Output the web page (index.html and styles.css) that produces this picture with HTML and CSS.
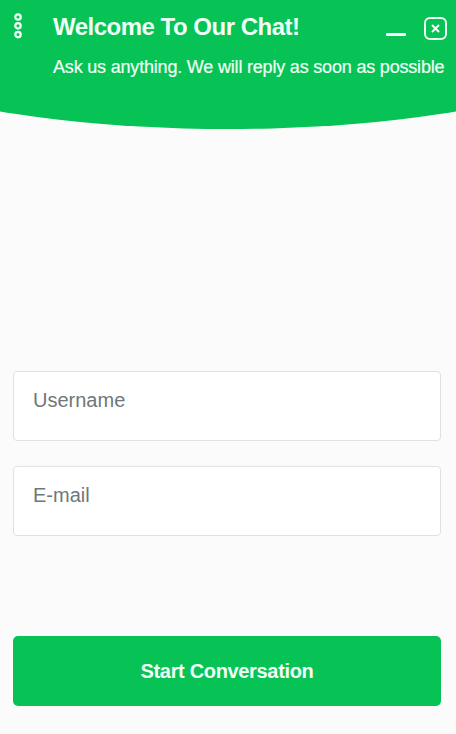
FILE: index.html
```html
<!DOCTYPE html>
<html lang="en">
<head>
    <meta charset="UTF-8">
    <meta name="viewport" content="width=device-width, initial-scale=1.0">
    <title>Chat</title>
    <link rel="stylesheet" href="styles.css">
</head>
<body>
    <header class="chat-header">
        <div class="header-top">
            <button class="icon-button menu-button" aria-label="Menu">
                <svg width="10" height="28" viewBox="0 0 10 28">
                    <circle cx="5" cy="4" r="2.7"/>
                    <circle cx="5" cy="12.8" r="2.7"/>
                    <circle cx="5" cy="21.6" r="2.7"/>
                </svg>
            </button>
            <h1>Welcome To Our Chat!</h1>
            <button class="icon-button minimize-button" aria-label="Minimize"><span></span></button>
            <button class="icon-button close-button" aria-label="Close">
                <svg width="23" height="23" viewBox="0 0 23 23">
                    <rect x="1" y="1" width="21" height="21" rx="5"/>
                    <path d="M8 8l7 7M15 8l-7 7"/>
                </svg>
            </button>
        </div>
        <p>Ask us anything. We will reply as soon as possible</p>
    </header>

    <form class="chat-form">
        <input type="text" placeholder="Username">
        <input type="email" placeholder="E-mail">
        <button type="button" class="start-button">Start Conversation</button>
    </form>
</body>
</html>
```

FILE: styles.css
```css
* {
    box-sizing: border-box;
}

body {
    margin: 0;
    height: 734px;
    background-color: #fbfbfb;
    font-family: "Liberation Sans", Arial, sans-serif;
    display: flex;
    flex-direction: column;
    justify-content: space-between;
    overflow: hidden;
}

.chat-header {
    height: 129px;
    background-color: #07c356;
    color: #effff5;
    clip-path: ellipse(453px 129px at 50% 0);
}

.header-top {
    display: flex;
    align-items: center;
    height: 54px;
    padding: 0 9px 0 13px;
}

.icon-button {
    display: flex;
    padding: 0;
    border: none;
    background: none;
}

.icon-button svg {
    fill: none;
    stroke: #effff5;
    stroke-width: 2;
}

.menu-button {
    width: 40px;
}

.menu-button svg {
    stroke-width: 2.3;
}

.minimize-button {
    margin: 15px 18px 0 auto;
}

.minimize-button span {
    width: 20px;
    height: 3px;
    border-radius: 1px;
    background-color: #fff;
}

.close-button {
    margin-top: 2px;
}

.chat-header h1 {
    margin: 0;
    font-size: 24px;
    letter-spacing: -0.5px;
    white-space: nowrap;
}

.chat-header p {
    margin: 2px 0 0 53px;
    font-size: 18px;
    line-height: 22px;
    letter-spacing: -0.19px;
    white-space: nowrap;
    -webkit-text-stroke: 0.2px #effff5;
}

.chat-form {
    display: flex;
    flex-direction: column;
    padding: 0 15px 28px 13px;
}

.chat-form input {
    height: 70px;
    margin: 0 0 25px;
    padding: 0 19px 12px;
    border: 1px solid #dfe1e2;
    border-radius: 4px;
    background-color: #fff;
    font-family: inherit;
    font-size: 20px;
}

.chat-form input::placeholder {
    color: #6e7779;
}

.start-button {
    height: 70px;
    margin-top: 75px;
    border: none;
    border-radius: 5px;
    background-color: #07c356;
    color: #effff5;
    font-family: inherit;
    font-size: 20px;
    font-weight: bold;
    letter-spacing: -0.33px;
}
```
